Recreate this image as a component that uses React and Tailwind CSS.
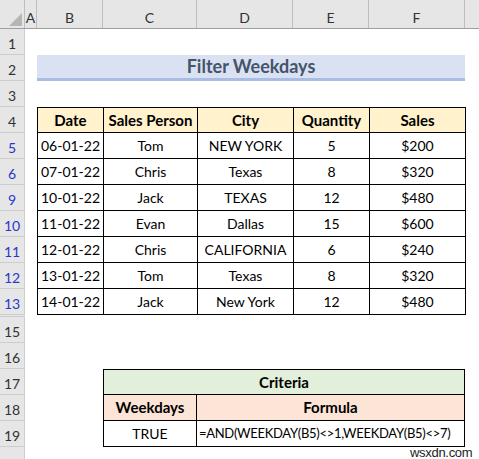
import React from 'react';

const cols = [
  { key: 'A', w: 'w-[12px]' },
  { key: 'B', w: 'w-[66px]' },
  { key: 'C', w: 'w-[94px]' },
  { key: 'D', w: 'w-[96px]' },
  { key: 'E', w: 'w-[76px]' },
  { key: 'F', w: 'w-[96px]' },
];

const data = [
  ['5', '06-01-22', 'Tom', 'NEW YORK', '5', '$200'],
  ['6', '07-01-22', 'Chris', 'Texas', '8', '$320'],
  ['9', '10-01-22', 'Jack', 'TEXAS', '12', '$480'],
  ['10', '11-01-22', 'Evan', 'Dallas', '15', '$600'],
  ['11', '12-01-22', 'Chris', 'CALIFORNIA', '6', '$240'],
  ['12', '13-01-22', 'Tom', 'Texas', '8', '$320'],
  ['13', '14-01-22', 'Jack', 'New York', '12', '$480'],
];

// row number cell on the left edge
const RowHead = ({ n, blue }) => (
  <div
    className={`w-[25px] shrink-0 h-full bg-[#e6e6e6] border-r border-b border-[#cdcdcd] flex items-end justify-center leading-[20px] text-[14px] ${
      blue ? 'text-[#2a37c9]' : 'text-[#333]'
    }`}
  >
    {n}
  </div>
);

const Row = ({ n, blue, children }) => (
  <div className="flex h-[26px]">
    <RowHead n={n} blue={blue} />
    <div className="w-[12px] shrink-0" />
    {children}
  </div>
);

export default function App() {
  return (
    <div className="w-[479px] h-[459px] overflow-hidden bg-white text-black font-['Lato','Liberation_Sans',sans-serif] relative">
      {/* column letters */}
      <div className="flex h-[29px] bg-[#e6e6e6] border-b border-[#9e9e9e] text-[14px] leading-[20px] text-[#333]">
        <div className="w-[25px] shrink-0 border-r border-[#bdbdbd] relative">
          <svg className="absolute left-[9px] top-[13px]" width="13" height="13" viewBox="0 0 13 13">
            <polygon points="13,0 13,13 0,13" fill="#b5b5b5" />
          </svg>
        </div>
        {cols.map((c) => (
          <div key={c.key} className={`${c.w} shrink-0 border-r border-[#bdbdbd] flex items-end justify-center`}>
            {c.key}
          </div>
        ))}
        <div className="flex-1" />
      </div>

      <Row n="1" />
      <Row n="2">
        <div className="w-[428px] h-full bg-[#d9e1f2] border-b-[3px] border-[#a9bce4] flex items-center justify-center font-bold text-[18px] text-[#44546a]">
          Filter Weekdays
        </div>
      </Row>
      <Row n="3" />
      <Row n="4">
        <div className="flex h-full bg-[#fff2cc] border-t border-l border-black font-bold text-[15px]">
          {['Date', 'Sales Person', 'City', 'Quantity', 'Sales'].map((h, i) => (
            <div
              key={h}
              className={`${cols[i + 1].w} shrink-0 border-r border-b border-black flex items-center justify-center ${i === 0 ? 'w-[65px]' : ''}`}
            >
              {h}
            </div>
          ))}
        </div>
      </Row>
      {data.map(([n, ...cells]) => (
        <Row key={n} n={n} blue>
          <div className="flex h-full border-l border-black text-[14px]">
            {cells.map((v, i) => (
              <div
                key={i}
                className={`${cols[i + 1].w} shrink-0 border-r border-b border-black flex items-center justify-center ${i === 0 ? 'w-[65px]' : ''}`}
              >
                {v}
              </div>
            ))}
          </div>
        </Row>
      ))}
      {/* hidden row 14 */}
      <div className="w-[25px] h-[2px] bg-[#e6e6e6] border-b border-[#cdcdcd]" />
      <Row n="15" />
      <Row n="16" />
      <Row n="17">
        <div className="w-[66px] shrink-0" />
        <div className="w-[362px] h-full bg-[#e2efda] border-t border-l border-r border-b border-black flex items-center justify-center font-bold text-[15px]">
          Criteria
        </div>
      </Row>
      <Row n="18">
        <div className="w-[66px] shrink-0" />
        <div className="flex h-full bg-[#fce4d6] border-l border-black font-bold text-[15px]">
          <div className="w-[93px] shrink-0 border-r border-b border-black flex items-center justify-center">Weekdays</div>
          <div className="w-[268px] shrink-0 border-r border-b border-black flex items-center justify-center">Formula</div>
        </div>
      </Row>
      <Row n="19">
        <div className="w-[66px] shrink-0" />
        <div className="flex h-full border-l border-black text-[14px]">
          <div className="w-[93px] shrink-0 border-r border-b border-black flex items-center justify-center">TRUE</div>
          <div className="w-[268px] shrink-0 border-r border-b border-black flex items-center pl-[2px] whitespace-nowrap text-[13px] tracking-[-0.3px]">
            =AND(WEEKDAY(B5)&lt;&gt;1,WEEKDAY(B5)&lt;&gt;7)
          </div>
        </div>
      </Row>
      <Row n="" />
      <div className="absolute left-[410px] top-[443px] text-[13px] text-[#222] font-['Liberation_Sans',sans-serif] tracking-[-0.3px]">
        wsxdn.com
      </div>
    </div>
  );
}
